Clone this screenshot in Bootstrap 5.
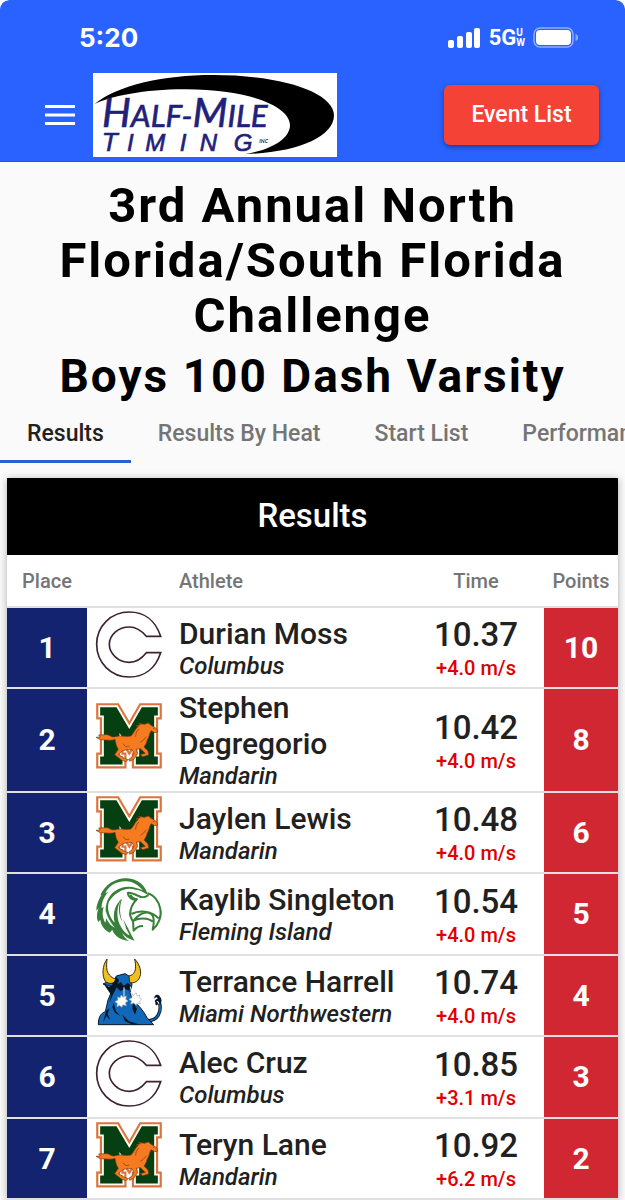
<!DOCTYPE html>
<html lang="en">
<head>
<meta charset="utf-8">
<meta name="viewport" content="width=device-width, initial-scale=1">
<title>Boys 100 Dash Varsity - Results</title>
<link href="https://cdn.jsdelivr.net/npm/bootstrap@5.3.0/dist/css/bootstrap.min.css" rel="stylesheet">
<style>
  html { background: #fff; }
  body { font-family: Roboto, "Liberation Sans", sans-serif; color: #212121; background: #fafafa; border-radius: 9px 9px 0 0; overflow-x: hidden; }
  .app-header { background: #2962ff; border-radius: 9px 9px 0 0; border-bottom: 1px solid #2152d8; color: #fff; padding-bottom: 4px; }
  .status-bar { height: 73px; padding: 2px 46px 0 79px; }
  .clock { font-family: Inter, sans-serif; font-size: 26px; font-weight: 700; }
  .network { font-size: 22px; font-weight: 700; line-height: 24px; }
  .network small { font-size: 10px; line-height: 10px; font-weight: 700; }
  .toolbar { padding: 0 26px 0 45px; gap: 18px; }
  .menu-btn { width: 30px; height: 30px; }
  .brand-logo { width: 244px; height: 84px; }
  .event-btn { background: #f44336; color: #fff; font-size: 23px; font-weight: 500; line-height: 24px; height: 60px; min-width: 155px; border-radius: 6px; box-shadow: 0 2px 5px rgba(0,0,0,.4); }
  .event-btn:hover { background: #e53935; color: #fff; }
  .meet-title { color: #000; font-size: 49px; line-height: 55px; font-weight: 700; letter-spacing: 2px; padding-top: 16px; }
  .event-title { color: #000; font-size: 46px; line-height: 49px; font-weight: 700; letter-spacing: 2px; padding-top: 9px; }
  .result-tabs { overflow: hidden; }
  .result-tabs .nav-link { color: #757575; font-size: 23px; line-height: 24px; font-weight: 500; padding: 21px 27px 14px; border-bottom: 3px solid transparent; white-space: nowrap; }
  .result-tabs .nav-link.active { color: #212121; border-color: #2b5fd0; }
  .result-card { margin: 15px 7px 0; background: #fff; box-shadow: 0 1px 8px rgba(0,0,0,.3); }
  .card-title-bar { background: #000; color: #fff; font-size: 33px; line-height: 75px; height: 77px; font-weight: 500; }
  .score-table { table-layout: fixed; width: 100%; }
  .score-table th { height: 52px; font-size: 20px; line-height: 24px; font-weight: 500; color: #757575; }
  .score-table tr { border-bottom: 2px solid #e0e0e0; }
  .score-table tbody tr { height: 82px; }
  .score-table tbody tr:nth-child(odd) { height: 81px; }
  .col-place { width: 80px; } .col-logo { width: 83px; } .col-time { width: 136px; } .col-points { width: 74px; }
  .score-table .place, .score-table .points { color: #fff; font-size: 30px; font-weight: 700; padding-bottom: 2px; }
  .place { background: #14236f; }
  .points { background: #d12733; }
  .team-logo { display: block; width: 68px; height: 68px; margin: 0 0 8px 7px; }
  .score-table .athlete { padding-left: 9px; }
  .athlete-name { font-size: 30px; line-height: 36px; font-weight: 500; }
  .school { font-size: 24px; line-height: 28px; font-style: italic; font-weight: 500; }
  .score-table .time-cell { padding-top: 4px; }
  .mark-time { font-size: 33px; line-height: 38px; font-weight: 500; }
  .wind { font-size: 20px; line-height: 28px; font-weight: 500; color: #e00000; }
</style>
</head>
<body>
<svg class="d-none" aria-hidden="true">
  <symbol id="columbus" viewBox="14 15 204 204">
    <path d="M211 94H168C152 75 136 66 117 66C84 66 57 90 57 118S84 172 117 172C136 172 152 163 168 143H211C195 192 160 216 117 216C62 216 19 173 19 118S62 21 117 21C160 21 195 45 211 94Z" fill="#fff" stroke="#3d2233" stroke-width="5"/>
  </symbol>
  <symbol id="mandarin" viewBox="15 26 204 204">
    <path d="M33 44H78L118 112L157 44H201V64H190V192H201V211H140V192H150V110L118 160L86 110V192H95V211H33V192H44V64H33Z" fill="#fff" stroke="#dc7442" stroke-width="29"/>
    <path d="M33 44H78L118 112L157 44H201V64H190V192H201V211H140V192H150V110L118 160L86 110V192H95V211H33V192H44V64H33Z" fill="#fffdf0" stroke="#fffdf0" stroke-width="16"/>
    <path d="M33 44H78L118 112L157 44H201V64H190V192H201V211H140V192H150V110L118 160L86 110V192H95V211H33V192H44V64H33Z" fill="#063f12" stroke="#063f12" stroke-width="5"/>
    <path d="M18 132L31 131L26 125L48 124C58 123 65 134 76 130C91 124 108 132 123 128C132 119 136 106 145 99L138 98L151 94L145 90L163 93L175 89L181 94L200 106L203 116L194 118L184 112C178 118 178 132 172 139C170 149 166 155 162 161L174 173L176 185L158 190L151 184L166 180L151 166L139 168L143 180L132 197L119 204L116 198L125 192L132 179L125 168L106 170L95 174L86 184L102 194L114 199L108 205L94 200L74 184L85 168C78 158 77 148 75 138C62 143 55 139 46 140L31 139Z" fill="#f57a20" stroke="#773b12" stroke-width="2"/>
    <path d="M147 107C139 112 137 123 137 130M169 130Q161 142 151 147M99 151Q107 164 118 158M189 105L193 106" fill="none" stroke="#7c3b0d" stroke-width="2"/>
  </symbol>
  <symbol id="fleming" viewBox="14 20 204 204">
    <path d="M172 75C160 72 154 62 135 61C107 51 73 69 56 97C49 115 55 140 73 160C65 129 77 101 95 88C84 119 89 152 108 177L98 150C115 177 121 196 133 214C113 208 101 199 95 190C99 201 107 209 116 215C92 212 71 200 66 181L58 190C41 181 31 166 30 151L24 158C17 145 20 130 25 116L18 124C18 104 27 88 34 76L30 78C44 45 77 25 110 27C143 29 164 47 172 75Z" fill="#388039"/>
    <path d="M158 63C143 48 130 37 108 36C76 35 54 51 45 72L54 67C38 84 33 106 34 117L40 112C34 133 38 148 45 160L48 147C56 163 63 171 74 175C57 157 50 137 46 125C45 91 63 65 94 55C120 48 139 56 158 63Z" fill="#fff"/>
    <path d="M92 92C84 106 82 136 97 158L118 198C103 192 91 174 85 158C78 131 82 106 92 92Z" fill="#fff"/>
    <path d="M111 71C122 67 130 75 145 80C156 86 168 83 174 77M112 70C113 84 126 94 140 90C130 88 122 82 121 76M140 89C132 97 120 112 119 135C120 143 125 150 128 157C145 132 168 125 181 133C192 139 192 158 187 181C204 167 215 141 210 119C207 97 190 76 171 72M123 134C147 121 182 124 205 147M125 157C143 144 174 144 187 157M128 157L130 184C139 173 147 169 158 170" fill="none" stroke="#388039" stroke-width="6" stroke-linejoin="round"/>
  </symbol>
  <symbol id="northwestern" viewBox="14 26 204 204">
    <path d="M168 214C202 216 214 188 208 162" fill="none" stroke="#091828" stroke-width="10"/>
    <path d="M168 214C202 216 214 188 208 164" fill="none" stroke="#1268b8" stroke-width="5"/>
    <path d="M24 226C24 205 30 192 45 187L53 152L63 128L65 112L38 104L52 97L68 103L78 80L104 73L119 82L125 106L119 130L128 156C147 168 160 186 170 205L190 226Z" fill="#1268b8" stroke="#091828" stroke-width="3"/>
    <path d="M50 29C36 48 34 79 45 96C57 107 74 102 80 90C67 88 54 78 50 63C48 52 49 42 50 29ZM133 29C137 52 138 65 126 76L116 80L118 100C139 104 151 88 151 68C150 52 143 40 133 29Z" fill="#f0c020" stroke="#3b2c0b" stroke-width="3"/>
    <path d="M40 104L56 112L66 106L78 84L86 92L82 104L92 98L100 110L112 100L121 108L117 124L103 118L90 126L79 114L66 140L58 160L62 136ZM47 186L58 176L52 194L60 212L48 200L38 220ZM128 158L140 178L134 196L126 178ZM96 196L116 216L150 226H128L104 216ZM70 160L76 184L90 200L74 190L66 174Z" fill="#081725"/>
    <path d="M192 148C190 136 204 132 209 142C216 150 214 160 209 166C206 158 202 152 198 156C206 160 204 168 198 168Q192 164 196 160C190 156 196 148 202 148C200 142 196 142 192 148Z" fill="#081725"/>
    <path d="M101 114V145M120 112L126 136" stroke="#e8f1ff" stroke-width="3"/>
    <path d="M82 143L89 146L93 137L98 144L108 140L106 150L113 155L105 160L108 169L98 166L94 174L88 168L80 172L81 162L74 157L83 152ZM125 133L130 139L137 130L140 139L149 137L146 145L154 150L147 155L151 163L141 161L137 168L131 161L121 164L124 155L116 150L125 145Z" fill="#fff" stroke="#a4afba" stroke-width="2"/>
  </symbol>
</svg>

<header class="app-header">
  <div class="status-bar d-flex align-items-center justify-content-between">
    <span class="clock">5:20</span>
    <div class="d-flex align-items-center">
      <svg width="33" height="20" viewBox="0 0 33 20" fill="#fff" aria-hidden="true"><rect y="12" width="6" height="8" rx="2"/><rect x="9" y="8" width="6" height="12" rx="2"/><rect x="18" y="4" width="6" height="16" rx="2"/><rect x="26" width="6" height="20" rx="2"/></svg>
      <span class="network d-flex align-items-center ms-2">5G<small class="d-flex flex-column"><span>U</span><span>W</span></small></span>
      <svg class="ms-2" width="46" height="21" viewBox="0 0 46 21" aria-hidden="true"><rect x="1" y="1" width="39" height="19" rx="6" fill="none" stroke="#8fadff" stroke-width="1.5"/><rect x="3" y="3" width="35" height="15" rx="4" fill="#fff"/><path d="M42.500 7C46 8 46 13 42.500 14Z" fill="#8fadff"/></svg>
    </div>
  </div>
  <nav class="toolbar d-flex align-items-center" aria-label="Main">
    <button class="menu-btn btn p-0 border-0 d-flex align-items-center" type="button" aria-label="Open menu">
      <svg width="30" height="20" viewBox="0 0 30 20" fill="#fff" aria-hidden="true"><path d="M0 0H30V3H0ZM0 8.500H30V11.500H0ZM0 17H30V20H0Z"/></svg>
    </button>
    <a href="#" class="d-block" aria-label="Half-Mile Timing Inc">
      <svg class="brand-logo d-block" viewBox="280 218 732 252">
        <path d="M280 218H1012V470H280Z" fill="#fff"/>
        <path d="M285 311C350 256 490 224 640 224C850 224 1003 277 1003 345C1003 410 890 458 737 461C817 448 871 415 871 374C869 314 740 268 560 267C440 266 335 287 285 311Z" fill="#000"/>
        <g font-family="Lato, sans-serif" font-style="italic" fill="#21217c" stroke="#21217c" stroke-width="2">
          <text x="307" y="381" font-size="122">H<tspan font-size="94">ALF-</tspan>M<tspan font-size="94">ILE</tspan></text>
          <text y="453" font-family="Liberation Sans, sans-serif" font-size="72"><tspan x="306" font-size="78">T</tspan><tspan x="382">I</tspan><tspan x="437">M</tspan><tspan x="540">I</tspan><tspan x="600">N</tspan><tspan x="702">G</tspan></text>
        </g>
        <text x="779" y="428" font-family="Lato, sans-serif" font-style="italic" font-weight="700" font-size="16" fill="#333">INC</text>
      </svg>
    </a>
    <button class="event-btn btn border-0 ms-auto" type="button">Event List</button>
  </nav>
</header>

<main>
  <h1 class="meet-title text-center mb-0 px-5">3rd Annual North Florida/South Florida Challenge</h1>
  <h2 class="event-title text-center mb-0">Boys 100 Dash Varsity</h2>
  <nav class="result-tabs nav flex-nowrap" aria-label="Event views">
    <a class="nav-link active" aria-current="page" href="#">Results</a>
    <a class="nav-link" href="#">Results By Heat</a>
    <a class="nav-link" href="#">Start List</a>
    <a class="nav-link" href="#">Performances</a>
  </nav>

  <section class="result-card">
    <div class="card-title-bar text-center">Results</div>
    <table class="score-table">
      <colgroup><col class="col-place"><col class="col-logo"><col><col class="col-time"><col class="col-points"></colgroup>
      <thead>
        <tr><th class="text-center">Place</th><th></th><th class="athlete">Athlete</th><th class="text-center">Time</th><th class="text-center">Points</th></tr>
      </thead>
      <tbody>
        <tr><td class="place text-center">1</td><td><svg class="team-logo"><use href="#columbus"/></svg></td><td class="athlete"><div class="athlete-name">Durian Moss</div><div class="school">Columbus</div></td><td class="time-cell text-center"><div class="mark-time">10.37</div><div class="wind">+4.0 m/s</div></td><td class="points text-center">10</td></tr>
        <tr><td class="place text-center">2</td><td><svg class="team-logo"><use href="#mandarin"/></svg></td><td class="athlete"><div class="athlete-name">Stephen Degregorio</div><div class="school">Mandarin</div></td><td class="time-cell text-center"><div class="mark-time">10.42</div><div class="wind">+4.0 m/s</div></td><td class="points text-center">8</td></tr>
        <tr><td class="place text-center">3</td><td><svg class="team-logo"><use href="#mandarin"/></svg></td><td class="athlete"><div class="athlete-name">Jaylen Lewis</div><div class="school">Mandarin</div></td><td class="time-cell text-center"><div class="mark-time">10.48</div><div class="wind">+4.0 m/s</div></td><td class="points text-center">6</td></tr>
        <tr><td class="place text-center">4</td><td><svg class="team-logo"><use href="#fleming"/></svg></td><td class="athlete"><div class="athlete-name">Kaylib Singleton</div><div class="school">Fleming Island</div></td><td class="time-cell text-center"><div class="mark-time">10.54</div><div class="wind">+4.0 m/s</div></td><td class="points text-center">5</td></tr>
        <tr><td class="place text-center">5</td><td><svg class="team-logo"><use href="#northwestern"/></svg></td><td class="athlete"><div class="athlete-name">Terrance Harrell</div><div class="school">Miami Northwestern</div></td><td class="time-cell text-center"><div class="mark-time">10.74</div><div class="wind">+4.0 m/s</div></td><td class="points text-center">4</td></tr>
        <tr><td class="place text-center">6</td><td><svg class="team-logo"><use href="#columbus"/></svg></td><td class="athlete"><div class="athlete-name">Alec Cruz</div><div class="school">Columbus</div></td><td class="time-cell text-center"><div class="mark-time">10.85</div><div class="wind">+3.1 m/s</div></td><td class="points text-center">3</td></tr>
        <tr><td class="place text-center">7</td><td><svg class="team-logo"><use href="#mandarin"/></svg></td><td class="athlete"><div class="athlete-name">Teryn Lane</div><div class="school">Mandarin</div></td><td class="time-cell text-center"><div class="mark-time">10.92</div><div class="wind">+6.2 m/s</div></td><td class="points text-center">2</td></tr>
      </tbody>
    </table>
  </section>
</main>
<script src="https://cdn.jsdelivr.net/npm/bootstrap@5.3.0/dist/js/bootstrap.bundle.min.js"></script>
</body>
</html>
